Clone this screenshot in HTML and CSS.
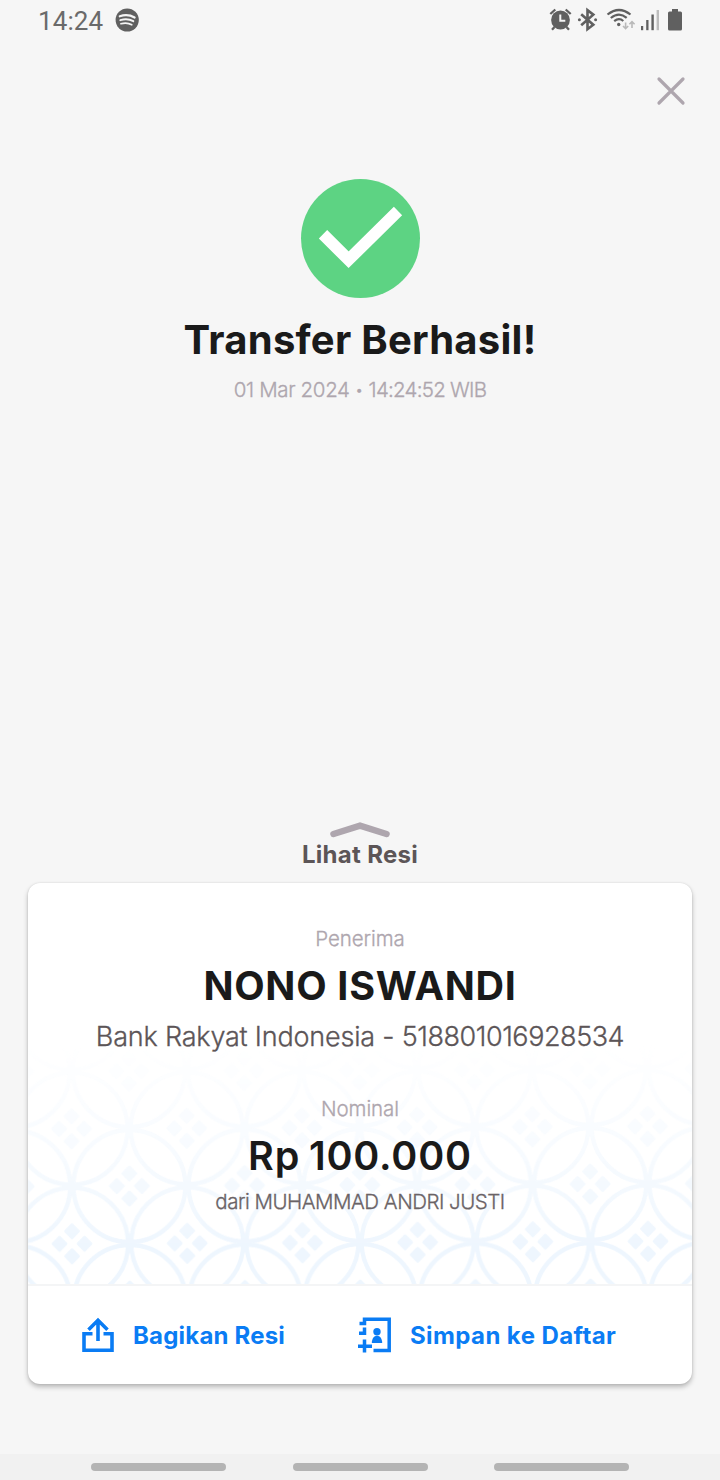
FILE: index.html
```html
<!DOCTYPE html>
<html lang="id">
<head>
<meta charset="utf-8">
<title>Transfer Berhasil</title>
<link rel="stylesheet" href="styles.css">
</head>
<body>
<div class="screen">
  <header class="status">
    <div class="status-left">
      <span class="clock">14:24</span>
      <svg class="music" width="24" height="24" viewBox="0 0 24 24"><circle cx="12.2" cy="12" r="11.6" fill="#606060"/><g fill="none" stroke="#f5f5f5" stroke-linecap="round"><path d="M4.8 8.300Q12.600 5.600 19.600 9.500" stroke-width="2.200"/><path d="M5.300 12.200Q12.400 9.900 18.300 13.200" stroke-width="1.900"/><path d="M5.900 15.800Q12 14 16.800 16.800" stroke-width="1.600"/></g></svg>
    </div>
    <svg class="status-icons" width="140" height="26" viewBox="548 7 140 26">
      <g fill="#606060">
        <circle cx="560.5" cy="20" r="9.400"/>
        <path d="M550.300 14l5-4.500M570.700 14l-5-4.500M554.500 27l-2.500 2.800M566.500 27l2.500 2.800" stroke="#606060" stroke-width="2.300"/>
        <path d="M560.300 14.500v6.200h5" fill="none" stroke="#f5f5f5" stroke-width="2"/>
        <path d="M581.200 14.200L593.300 24.800l-5.800 4.400V10.200l5.800 4.400L581.200 25.300" fill="none" stroke="#606060" stroke-width="2.600"/>
        <circle cx="579.400" cy="19.700" r="1.500"/><circle cx="595.600" cy="19.700" r="1.500"/>
        <circle cx="618.700" cy="24.500" r="1.700"/>
        <path d="M607.500 14.500Q619 5.500 630.500 14.500M610.800 18Q619 11.200 626.700 17.800M614.200 21.200Q619 17.300 623.300 21" fill="none" stroke="#606060" stroke-width="2.200"/>
        <path d="M625.600 22.500v6M623 26l2.600 2.700 2.600-2.700M632 28v-6M629.400 24.300l2.600-2.700 2.600 2.700" fill="none" stroke="#b9b9b9" stroke-width="1.600"/>
        <rect x="641" y="26" width="2.200" height="4.200"/><rect x="646.200" y="20" width="2.300" height="10.200"/><rect x="651.400" y="14.500" width="2.400" height="15.700"/><rect x="656.600" y="10" width="2.400" height="20.200" fill="#bdbdbd"/>
        <path d="M672 9h6v2.500h2.500q1.500 0 1.500 1.500v16q0 1.500-1.500 1.500h-11q-1.500 0-1.500-1.500v-16q0-1.500 1.500-1.500h2.500z"/>
      </g>
    </svg>
  </header>

  <div class="toolbar">
    <svg width="30" height="30" viewBox="0 0 30 30"><path d="M3 3l24 24M27 3L3 27" stroke="#aea6ae" stroke-width="3.200" stroke-linecap="round"/></svg>
  </div>

  <main class="result">
    <svg class="check" width="120" height="120" viewBox="0 0 120 120"><circle cx="60.500" cy="59.500" r="59.500" fill="#5dd383"/><path d="M23 55.300L48.600 80.800L98 32" fill="none" stroke="#fff" stroke-width="11.800"/></svg>
    <h1 class="title">Transfer Berhasil!</h1>
    <p class="date"><span class="day">01 Mar 2024</span><span class="dot">•</span><span class="time">14:24:52 WIB</span></p>
  </main>

  <div class="expand">
    <svg width="60" height="16" viewBox="0 2 60 16"><path d="M3.500 14L30 5.600L56.500 14" fill="none" stroke="#aea6ae" stroke-width="6.500" stroke-linecap="round"/></svg>
    <p class="expand-label">Lihat Resi</p>
  </div>

  <section class="card">
    <div class="details">
      <svg class="batik" width="664" height="240" viewBox="28 1045 664 240">
        <defs>
          <pattern id="kawung" patternUnits="userSpaceOnUse" width="115.200" height="115" patternTransform="translate(14.200 1187.500) rotate(-0.250)">
            <g fill="none" stroke="#eef6fe" stroke-width="4.400">
              <circle cx="0" cy="0" r="56"/><circle cx="115.200" cy="0" r="56"/><circle cx="0" cy="115" r="56"/><circle cx="115.200" cy="115" r="56"/><circle cx="57.600" cy="57.500" r="56"/>
            </g>
            <g fill="#eef6fe">
              <g id="motif"><rect id="gem" x="-6" y="-6" width="12" height="12" rx="1.500" transform="translate(0 -12.500) rotate(45)"/><use href="#gem" transform="rotate(90)"/><use href="#gem" transform="rotate(180)"/><use href="#gem" transform="rotate(270)"/></g>
              <use href="#motif" x="115.200"/><use href="#motif" y="115"/><use href="#motif" x="115.200" y="115"/><use href="#motif" x="57.600" y="57.500"/>
            </g>
          </pattern>
          <linearGradient id="fade" x1="0" y1="0" x2="0" y2="1"><stop offset="0" stop-color="#fff" stop-opacity="0"/><stop offset=".45" stop-color="#fff" stop-opacity=".45"/><stop offset=".85" stop-color="#fff"/></linearGradient>
          <mask id="fadeMask"><rect x="28" y="1045" width="664" height="240" fill="url(#fade)"/></mask>
        </defs>
        <rect x="28" y="1045" width="664" height="240" fill="url(#kawung)" mask="url(#fadeMask)"/>
      </svg>
      <p class="label">Penerima</p>
      <p class="name">NONO ISWANDI</p>
      <p class="bank">Bank Rakyat Indonesia - <span class="account">518801016928534</span></p>
      <p class="label sum">Nominal</p>
      <p class="amount">Rp 100.000</p>
      <p class="from">dari MUHAMMAD ANDRI JUSTI</p>
    </div>
    <div class="actions">
      <div class="action share">
        <svg width="34" height="36" viewBox="0 0 34 36"><path d="M11.500 16.800H3V33.200H31V16.800H22.500M17 24V4M7.500 12.800L17 3.300L26.500 12.800" fill="none" stroke="#0a7cf4" stroke-width="3.600"/></svg>
        <span class="share-text">Bagikan Resi</span>
      </div>
      <div class="action save">
        <svg width="34" height="36" viewBox="0 0 34 36"><g fill="none" stroke="#0a7cf4" stroke-width="3.500"><path d="M1.500 6.500H6.500V2.200H31.200V33.500H15.500M1 16.200H6.500V10.500M6.500 22.500v13M0 29.200H14"/></g><g fill="#0a7cf4"><circle cx="19" cy="14.800" r="3.700"/><path d="M13.800 26c0-4 2-7.200 5.200-7.200s5.200 3.200 5.200 7.200z"/></g></svg>
        <span class="save-text">Simpan ke Daftar</span>
      </div>
    </div>
  </section>

  <nav class="nav"><i></i><i></i><i></i></nav>
</div>
</body>
</html>
```

FILE: styles.css
```css
* { box-sizing: border-box; }
body { margin: 0; background: #f5f5f5; font-family: Inter, "Liberation Sans", sans-serif; }
p, h1 { margin: 0; white-space: nowrap; text-align: center; }
svg { display: block; flex: none; }
.screen { width: 720px; height: 1480px; display: flex; flex-direction: column; background: #f6f6f6; overflow: hidden; }

.status { height: 42px; display: flex; justify-content: space-between; padding: 7px 32px 0 38px; }
.status-left { display: flex; gap: 12px; align-items: flex-start; }
.clock { font: 400 26px/28px Roboto, sans-serif; color: #6a6a6a; letter-spacing: .1px; }
.music { margin-top: 1px; }

.toolbar { display: flex; justify-content: flex-end; padding: 34px 34px 0 0; height: 137px; }

.result { height: 643px; display: flex; flex-direction: column; align-items: center; }
.title { margin-top: 16px; font-size: 40px; line-height: 50px; font-weight: 700; color: #1a1a1a; letter-spacing: .25px; }
.date, .label, .bank, .from { font-weight: 300; -webkit-text-stroke: .3px currentColor; }
.date { margin-top: 11px; display: flex; font-size: 20.500px; line-height: 28px; color: #aea6ae; }
.day { letter-spacing: -.35px; }
.dot { width: 19px; font-size: 14px; }
.time { letter-spacing: -.75px; }

.expand { height: 61px; display: flex; flex-direction: column; align-items: center; }
.expand-label { margin-top: 2px; font-size: 24px; line-height: 30px; font-weight: 700; color: #5c5557; letter-spacing: .3px; }

.card { margin: 0 28px; height: 501px; background: #fff; border-radius: 12px; box-shadow: 0 3px 5px rgba(0,0,0,.25), 0 0 2px rgba(0,0,0,.12); overflow: hidden; }
.details { height: 403px; position: relative; border-bottom: 2px solid #f4f5f6; padding-top: 42px; }
.details p { position: relative; }
.batik { position: absolute; left: 0; bottom: 0; }
.label { font-size: 20.500px; line-height: 28px; color: #aea6ae; letter-spacing: -.1px; }
.name { margin-top: 8px; font-size: 39.500px; line-height: 50px; font-weight: 700; color: #1a1a1a; letter-spacing: .7px; }
.bank { margin-top: 9px; font-size: 27px; line-height: 34px; color: #5c5557; letter-spacing: -.2px; }
.account { letter-spacing: -.45px; }
.sum { margin-top: 41px; }
.amount { margin-top: 8px; font-size: 39.500px; line-height: 50px; font-weight: 600; color: #1a1a1a; letter-spacing: .8px; word-spacing: -2px; }
.from { margin-top: 7px; font-size: 20.500px; line-height: 28px; color: #6a6366; letter-spacing: -.5px; }

.actions { height: 98px; display: flex; align-items: center; padding-left: 53px; }
.action { display: flex; align-items: center; color: #0a7cf4; font-size: 24px; line-height: 30px; font-weight: 700; gap: 18px; white-space: nowrap; letter-spacing: .2px; }
.action span { padding-top: 2px; }
.share { width: 277px; }
.save { letter-spacing: .4px; }

.nav { margin-top: auto; height: 26px; background: #f1f1f1; display: flex; justify-content: space-between; padding: 9px 91px 0; }
.nav i { width: 135px; height: 7.500px; border-radius: 4px; background: #b4b4b4; }
```
